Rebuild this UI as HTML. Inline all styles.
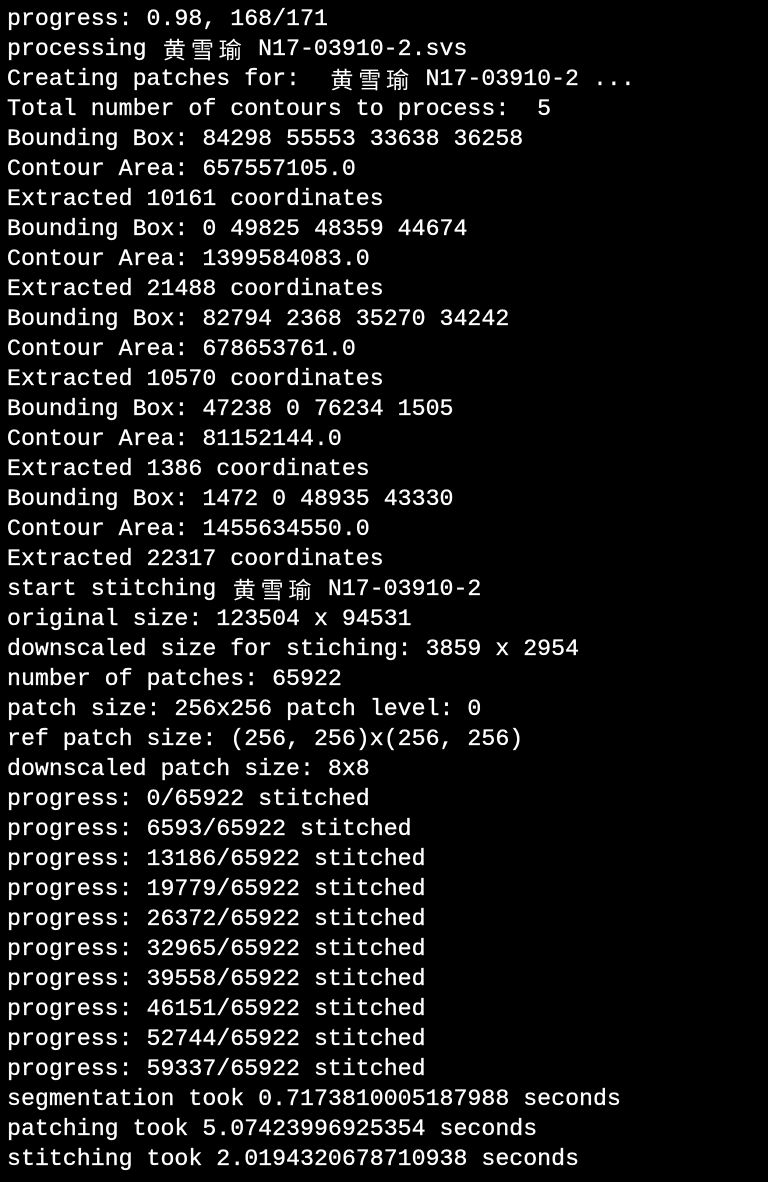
<!DOCTYPE html>
<html><head><meta charset="utf-8"><style>
html,body{margin:0;background:#000;width:768px;height:1182px;overflow:hidden}
.t{padding:4px 0 0 7px;color:#fff;font-family:"Liberation Mono","Noto Sans CJK SC",monospace;font-size:23.25px;-webkit-text-stroke:0.3px #fff}
.t div{height:30px;line-height:30px;overflow:visible;white-space:pre}
.c{display:inline-block;width:27.9px;height:30px;line-height:28px;vertical-align:top;text-align:center;font-family:"Noto Sans CJK SC",sans-serif;font-size:23px;-webkit-text-stroke:0}
</style></head><body><div class="t">
<div>progress: 0.98, 168/171</div>
<div>processing <span class="c">黄</span><span class="c">雪</span><span class="c">瑜</span> N17-03910-2.svs</div>
<div>Creating patches for:  <span class="c">黄</span><span class="c">雪</span><span class="c">瑜</span> N17-03910-2 ...</div>
<div>Total number of contours to process:  5</div>
<div>Bounding Box: 84298 55553 33638 36258</div>
<div>Contour Area: 657557105.0</div>
<div>Extracted 10161 coordinates</div>
<div>Bounding Box: 0 49825 48359 44674</div>
<div>Contour Area: 1399584083.0</div>
<div>Extracted 21488 coordinates</div>
<div>Bounding Box: 82794 2368 35270 34242</div>
<div>Contour Area: 678653761.0</div>
<div>Extracted 10570 coordinates</div>
<div>Bounding Box: 47238 0 76234 1505</div>
<div>Contour Area: 81152144.0</div>
<div>Extracted 1386 coordinates</div>
<div>Bounding Box: 1472 0 48935 43330</div>
<div>Contour Area: 1455634550.0</div>
<div>Extracted 22317 coordinates</div>
<div>start stitching <span class="c">黄</span><span class="c">雪</span><span class="c">瑜</span> N17-03910-2</div>
<div>original size: 123504 x 94531</div>
<div>downscaled size for stiching: 3859 x 2954</div>
<div>number of patches: 65922</div>
<div>patch size: 256x256 patch level: 0</div>
<div>ref patch size: (256, 256)x(256, 256)</div>
<div>downscaled patch size: 8x8</div>
<div>progress: 0/65922 stitched</div>
<div>progress: 6593/65922 stitched</div>
<div>progress: 13186/65922 stitched</div>
<div>progress: 19779/65922 stitched</div>
<div>progress: 26372/65922 stitched</div>
<div>progress: 32965/65922 stitched</div>
<div>progress: 39558/65922 stitched</div>
<div>progress: 46151/65922 stitched</div>
<div>progress: 52744/65922 stitched</div>
<div>progress: 59337/65922 stitched</div>
<div>segmentation took 0.7173810005187988 seconds</div>
<div>patching took 5.07423996925354 seconds</div>
<div>stitching took 2.0194320678710938 seconds</div>
</div></body></html>
